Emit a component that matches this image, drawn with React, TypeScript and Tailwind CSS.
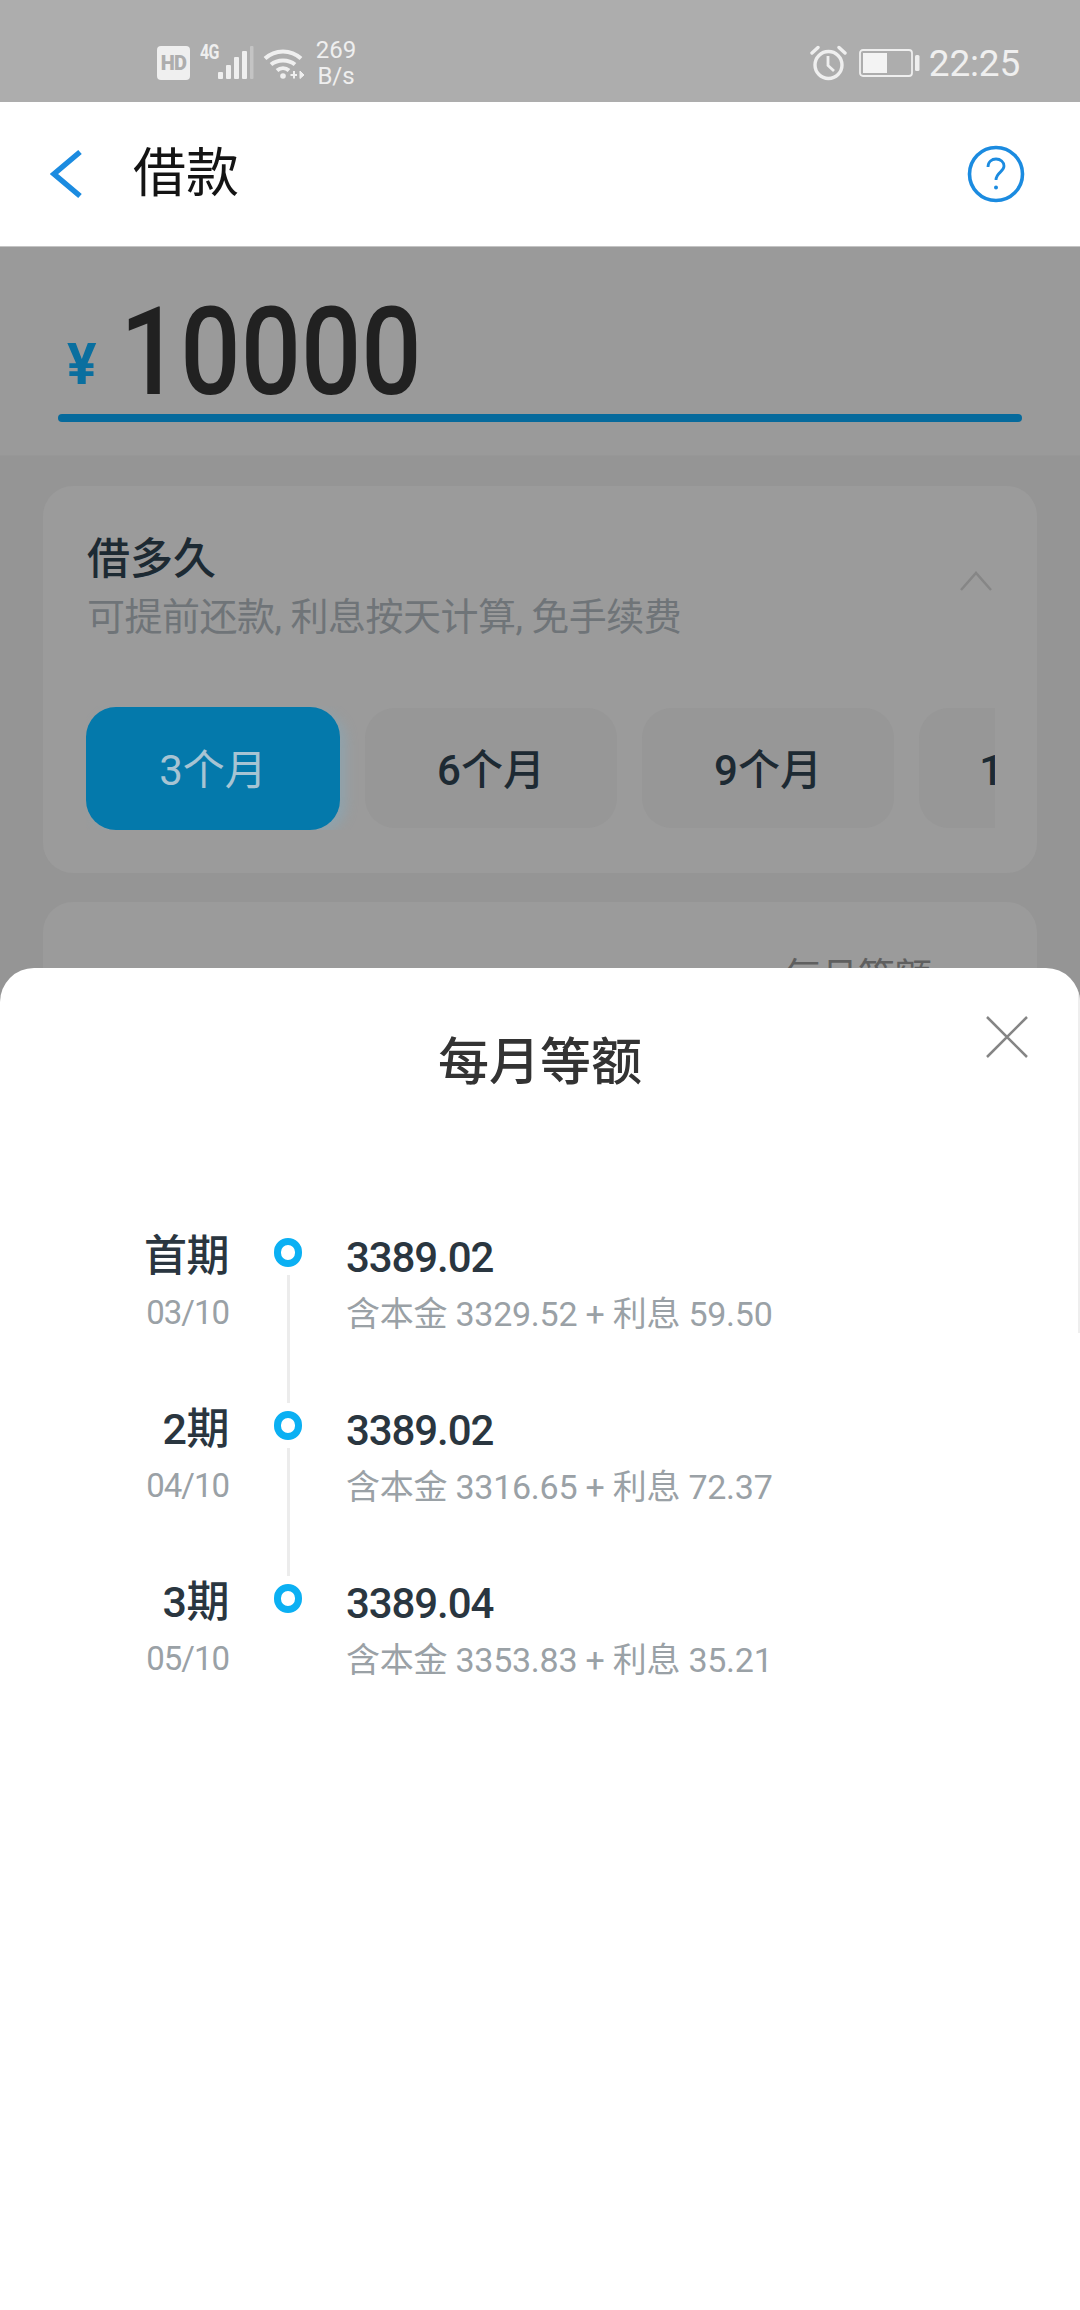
const font = "[font-family:Roboto,'Noto_Sans_CJK_SC',sans-serif]";

const rows = [
  { label: "首期", date: "03/10", amount: "3389.02", principal: "3329.52", interest: "59.50" },
  { label: "2期", date: "04/10", amount: "3389.02", principal: "3316.65", interest: "72.37" },
  { label: "3期", date: "05/10", amount: "3389.04", principal: "3353.83", interest: "35.21" },
];

function StatusBar() {
  return (
    <div className="h-[102px] bg-[#adadad] flex items-center pl-[157px] pr-[60px] pt-[24px] text-[#efefef]">
      <div className="w-[33px] h-[34px] rounded-[4px] bg-[#efefef] flex items-center justify-center text-[#adadad] text-[20px] font-black tracking-[-0.8px]">HD</div>
      <div className="relative ml-[10px] w-[54px] h-[34px]">
        <span className="absolute left-0 -top-[5px] text-[20px] font-bold tracking-[-0.8px] leading-[22px] origin-left scale-x-[0.8]">4G</span>
        <svg className="absolute inset-0" width="54" height="34" viewBox="0 0 54 34">
          <rect x="18" y="26" width="5" height="7" rx="1" fill="#efefef" />
          <rect x="26" y="19" width="5" height="14" rx="1" fill="#efefef" />
          <rect x="34" y="11" width="5" height="22" rx="1" fill="#efefef" />
          <rect x="42" y="5" width="5" height="28" rx="1" fill="#efefef" />
          <rect x="50" y="0" width="3.500" height="33" rx="1" fill="#c4c4c4" />
        </svg>
      </div>
      <svg className="ml-[9px]" width="42" height="32" viewBox="0 0 42 32" fill="none" stroke="#efefef" strokeWidth="4">
        <path d="M2 11.5C12 2 28 2 38 11.5" />
        <path d="M8 17.5C14.500 12 25.500 12 32 17.500" />
        <path d="M14 23.500C17.500 20.500 22.500 20.500 26 23.500" />
        <circle cx="20" cy="29" r="2.800" fill="#efefef" stroke="none" />
        <path d="M31 24V31.500M27.500 28H34" strokeWidth="2" />
        <path d="M37 24V31.500L41 28Z" strokeWidth="1" fill="#efefef" />
      </svg>
      <div className="ml-[10px] flex flex-col items-center text-[24px] leading-[26px] w-[42px]">
        <span>269</span>
        <span>B/s</span>
      </div>
      <svg className="ml-auto" width="37" height="36" viewBox="0 0 37 36" fill="none" stroke="#efefef" strokeWidth="3.400">
        <circle cx="18.500" cy="20" r="13.500" />
        <path d="M18 11V20.500L24 26" strokeWidth="2.800" />
        <path d="M2 8L8 2.500M35 8L29 2.500" strokeLinecap="round" />
      </svg>
      <svg className="ml-[12px]" width="62" height="30" viewBox="0 0 62 30" fill="none">
        <rect x="1" y="2" width="52" height="26" rx="3" stroke="#efefef" strokeWidth="1.800" />
        <rect x="4" y="5" width="24" height="20" fill="#f3f3f3" />
        <rect x="56" y="7" width="4.500" height="16" rx="1.500" fill="#efefef" />
      </svg>
      <span className="ml-[8px] text-[37px] leading-none tracking-[-0.2px]">22:25</span>
    </div>
  );
}

function Header() {
  return (
    <div className="h-[145px] bg-white flex items-center pl-[50px] pr-[55px] border-b border-[#c4c4c4]">
      <svg width="32" height="50" viewBox="0 0 32 50" fill="none" stroke="#1b8be0" strokeWidth="5.500">
        <path d="M30 3L4 25L30 47" strokeLinejoin="miter" />
      </svg>
      <h1 className="ml-[51px] text-[53px] leading-none font-normal text-[#141414]">借款</h1>
      <svg className="ml-auto" width="58" height="58" viewBox="0 0 58 58" fill="none" stroke="#1b8be0">
        <circle cx="29" cy="29" r="26.500" strokeWidth="3.600" />
        <path d="M21 22C21 16.500 25 14 29 14C33.500 14 37 17 37 21C37 27 29 27.500 29 35" strokeWidth="2.800" />
        <circle cx="29" cy="42.500" r="2" fill="#1b8be0" stroke="none" />
      </svg>
    </div>
  );
}

function Amount() {
  return (
    <div className="h-[209px] bg-[#9a9a9a] px-[58px] pt-[48px] border-b border-[#979797]">
      <div className="flex items-end h-[119px]">
        <span className="text-[58px] font-bold leading-none text-[#0a6f9f] mb-[21px] ml-[9px] w-[28px] origin-left scale-x-[0.95]">¥</span>
        <span className="ml-[25px] text-[122px] font-medium leading-[122px] text-[#212121] origin-left scale-x-[0.87]">10000</span>
      </div>
      <div className="h-[8px] rounded-full bg-[#066a9c]" />
    </div>
  );
}

function Tab({ label, active }: { label: string; active?: boolean }) {
  return (
    <div
      className={
        active
          ? "w-[254px] h-[123px] shrink-0 rounded-[30px] bg-[#0479ab] flex items-center justify-center pt-[4px] text-[42px] text-[#a7c4d3] shadow-[6px_4px_12px_#8fa3ad]"
          : "w-[252px] h-[120px] shrink-0 rounded-[30px] bg-[#979797] flex items-center justify-center pt-[4px] text-[42px] font-medium text-[#1d2a33]"
      }
    >
      {label}
    </div>
  );
}

function Background() {
  return (
    <div className="bg-[#959595] px-[43px] pt-[30px]">
      <div className="relative h-[387px] rounded-[30px] bg-[#9b9b9b] pl-[45px] pt-[48px]">
        <h2 className="-ml-[1px] text-[43px] leading-[50px] font-medium text-[#1d2a33]">借多久</h2>
        <p className="-ml-[1px] mt-[10px] text-[38px] leading-[46px] text-[#6f7478] tracking-[-0.5px]">可提前还款, 利息按天计算, 免手续费</p>
        <svg className="absolute right-[44px] top-[84px]" width="34" height="22" viewBox="0 0 34 22" fill="none" stroke="#868686" strokeWidth="2.500">
          <path d="M2 20L17 3L32 20" />
        </svg>
        <div className="mt-[66px] -ml-[2px] w-[909px] h-[124px] overflow-hidden flex items-center gap-[25px]">
          <Tab label="3个月" active />
          <Tab label="6个月" />
          <Tab label="9个月" />
          <Tab label="12个月" />
        </div>
      </div>
      <div className="mt-[29px] h-[700px] rounded-[30px] bg-[#9b9b9b] flex justify-end pr-[105px] pt-[52px]">
        <span className="text-[37px] leading-[48px] text-[#5f5f5f]">每月等额</span>
      </div>
    </div>
  );
}

function Row({ r }: { r: (typeof rows)[number] }) {
  return (
    <div className="h-[173px] flex">
      <div className="w-[229px] flex flex-col items-end shrink-0">
        <span className="text-[43px] leading-[48px] font-medium text-[#2a3640] tracking-[-0.5px]">{r.label}</span>
        <span className="mt-[14px] text-[33px] leading-[38px] text-[#9aa1a6] tracking-[-1px]">{r.date}</span>
      </div>
      <div className="w-[118px] shrink-0 flex justify-center">
        <div className="w-[28px] h-[29px] rounded-full border-[7px] border-[#0bb0f3] mt-[6px]" />
      </div>
      <div className="flex flex-col -ml-[1px]">
        <span className="text-[42px] leading-[48px] pt-[2px] box-content font-medium text-[#2a3640] tracking-[-1.1px]">{r.amount}</span>
        <span className="mt-[13px] text-[34px] leading-[38px] text-[#9aa1a6] tracking-[-0.25px]">
          含本金 {r.principal} + 利息 {r.interest}
        </span>
      </div>
    </div>
  );
}

function Sheet() {
  return (
    <div className="absolute left-0 right-0 top-[968px] bottom-0 bg-white rounded-t-[34px] overflow-hidden">
      <div className="absolute right-0 top-[22px] h-[343px] w-[2px] bg-[#eeeeee]" />
      <h3 className="pt-[65px] text-center text-[51px] leading-[60px] font-medium text-[#333333]">每月等额</h3>
      <svg className="absolute left-[985px] top-[47px]" width="44" height="44" viewBox="0 0 44 44" fill="none" stroke="#858585" strokeWidth="2.500">
        <path d="M2 2L42 42M42 2L2 42" />
      </svg>
      <div className="relative mt-[139px]">
        <div className="absolute left-[287px] top-[43px] h-[128px] w-[3px] bg-[#ececec]" />
        <div className="absolute left-[287px] top-[216px] h-[128px] w-[3px] bg-[#ececec]" />
        {rows.map((r) => (
          <Row key={r.label} r={r} />
        ))}
      </div>
    </div>
  );
}

export default function App() {
  return (
    <div className={`relative w-[1080px] h-[2310px] overflow-hidden bg-[#959595] ${font}`}>
      <StatusBar />
      <Header />
      <Amount />
      <Background />
      <Sheet />
    </div>
  );
}
